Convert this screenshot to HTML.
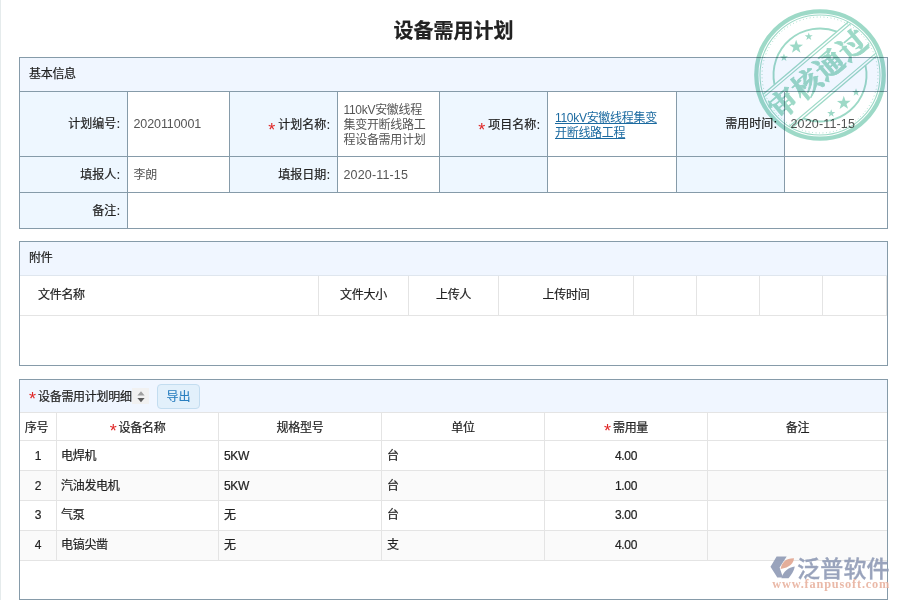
<!DOCTYPE html>
<html lang="zh-CN">
<head>
<meta charset="utf-8">
<title>设备需用计划</title>
<style>
html,body{margin:0;padding:0}
body{position:relative;width:900px;height:600px;overflow:hidden;background:#fff;font-family:"Liberation Sans","Noto Sans CJK SC",sans-serif;font-size:12px;line-height:15px;color:#222}
.strip{position:absolute;left:0;top:0;width:1px;height:600px;background:#e5ebec}
h1{position:absolute;left:0;top:15px;width:907px;height:32px;margin:0;font-size:20px;line-height:32px;font-weight:bold;text-align:center;color:#222;-webkit-text-stroke:0.22px #222}
.panel{position:absolute;left:19px;width:869px;box-sizing:border-box;border:1px solid #869ba9;background:#fff}
.panel-hd{box-sizing:border-box;height:34px;padding:9px 0 0 9px;background:#f0f6ff;border-bottom:1px solid #869ba9;letter-spacing:-0.3px;-webkit-text-stroke:0.2px #222}
#attach .panel-hd{border-bottom-color:#dfe6ee}
table{border-collapse:separate;border-spacing:0;table-layout:fixed;width:867px;font-size:12px;line-height:15px;font-weight:normal;font-style:normal;text-align:left;white-space:normal}
th,td{box-sizing:border-box;padding:0;font-weight:normal;vertical-align:middle;white-space:nowrap;overflow:hidden;text-align:left}
th{color:#222;-webkit-text-stroke:0.2px #222}
.x{display:inline-block;position:relative}
.d1{top:1px}.d2{top:2px}
.req{display:inline-block;position:relative;top:7px;width:7px;margin-right:3px;color:#e02828;font-size:18px;line-height:0;-webkit-text-stroke:0 transparent}
.req2{top:4px;margin-right:2px}
.cl{margin-left:0.5px}

/* basic info form */
.form th,.form td{border-right:1px solid #869ba9;border-bottom:1px solid #869ba9}
.form tr>*:last-child{border-right:0}
.form tr:last-child>*{border-bottom:0}
.form th{background:#eef7ff;text-align:right;padding-right:7px}
.form td{color:#555;padding-left:5.5px}
.form .r1>*{height:65px}
.form .r2>*{height:36px}
.form .r3>*{height:35px}
.cj{letter-spacing:-0.3px}
.num{font-size:12.5px;letter-spacing:-0.1px}
.dt{font-size:12.5px;letter-spacing:0.15px}
.lnk{margin-left:1.5px}
.lnk a{color:#1b6aa0;text-decoration:underline}

/* attachments */
.files th{height:40px;border-right:1px solid #e4e4e4;border-bottom:1px solid #e4e4e4;text-align:center;letter-spacing:-0.3px}
.files th:first-child{text-align:left;padding-left:18px}

/* detail grid */
.toolbar{position:relative;box-sizing:border-box;height:33px;background:#f0f6ff;border-bottom:1px solid #e4e4e4}
.tb-title{position:absolute;left:9px;top:10px;letter-spacing:-0.3px;-webkit-text-stroke:0.2px #222}
.sort{position:absolute;left:112px;top:8px;width:17px;height:16px;background:#f1f1f1}
.sort svg{position:absolute;left:3.5px;top:2px}
.btn{position:absolute;left:137px;top:4px;box-sizing:border-box;width:43px;height:25px;margin:0;padding:0;background:#e2f0fb;border:1px solid #c3ddf0;border-radius:4px;color:#2a7fc0;font-family:"Liberation Sans","Noto Sans CJK SC",sans-serif;font-size:12px;line-height:23px;text-align:center;-webkit-text-stroke:0.15px #2a7fc0}
.btn .x{top:1px}
.grid th,.grid td{border-right:1px solid #e4e4e4;border-bottom:1px solid #e4e4e4;letter-spacing:-0.3px;color:#222;-webkit-text-stroke:0.2px #222}
.grid tr>*:last-child{border-right:0}
.grid th{height:28px;text-align:center}
.grid td{height:30px}
.grid tr.alt td{background:#fafafa}
.grid td.c{text-align:center}
.grid td.p4{padding-left:4px}
.grid td.p5{padding-left:5px}
.grid th .req2{top:5px}

.stamp{position:absolute;left:749.7px;top:4.6px;opacity:.88;mix-blend-mode:multiply}
.logo{position:absolute;left:765px;top:550px;opacity:.9}
</style>
</head>
<body>
<div class="strip"></div>
<h1>设备需用计划</h1>

<section class="panel" id="basic" style="top:57px;height:172px">
<div class="panel-hd">基本信息</div>
<table class="form">
<colgroup><col style="width:108px"><col style="width:102px"><col style="width:108px"><col style="width:102px"><col style="width:108px"><col style="width:129px"><col style="width:108px"><col style="width:102px"></colgroup>
<tr class="r1">
<th><span class="x">计划编号<span class="cl">:</span></span></th>
<td><span class="x num">2020110001</span></td>
<th><span class="x d1"><span class="req">*</span>计划名称<span class="cl">:</span></span></th>
<td><span class="x cj d1">110kV安徽线程<br>集变开断线路工<br>程设备需用计划</span></td>
<th><span class="x d1"><span class="req">*</span>项目名称<span class="cl">:</span></span></th>
<td><span class="x cj d2 lnk"><a>110kV安徽线程集变<br>开断线路工程</a></span></td>
<th><span class="x">需用时间<span class="cl">:</span></span></th>
<td><span class="x dt">2020-11-15</span></td>
</tr>
<tr class="r2">
<th><span class="x d1">填报人<span class="cl">:</span></span></th>
<td><span class="x cj d1">李朗</span></td>
<th><span class="x d1">填报日期<span class="cl">:</span></span></th>
<td><span class="x dt d1">2020-11-15</span></td>
<th></th>
<td></td>
<th></th>
<td></td>
</tr>
<tr class="r3">
<th><span class="x d1">备注<span class="cl">:</span></span></th>
<td colspan="7"></td>
</tr>
</table>
</section>

<section class="panel" id="attach" style="top:241px;height:125px">
<div class="panel-hd">附件</div>
<table class="files">
<colgroup><col style="width:299px"><col style="width:90px"><col style="width:90px"><col style="width:135px"><col style="width:63px"><col style="width:63px"><col style="width:63px"><col style="width:64px"></colgroup>
<tr>
<th>文件名称</th>
<th>文件大小</th>
<th>上传人</th>
<th>上传时间</th>
<th></th>
<th></th>
<th></th>
<th></th>
</tr>
</table>
</section>

<section class="panel" id="detail" style="top:379px;height:221px">
<div class="toolbar">
<span class="tb-title"><span class="req req2">*</span>设备需用计划明细</span>
<span class="sort"><svg width="10" height="13" viewBox="0 0 10 13"><path d="M5 1.3 L8.6 5.5 H1.4 Z" fill="#a0a0a0"/><path d="M1.4 8 H8.6 L5 12.2 Z" fill="#5a5a5a"/></svg></span>
<button class="btn" type="button"><span class="x">导出</span></button>
</div>
<table class="grid">
<colgroup><col style="width:37px"><col style="width:162px"><col style="width:163px"><col style="width:163px"><col style="width:163px"><col style="width:179px"></colgroup>
<tr>
<th><span class="x d2" style="left:-1.5px">序号</span></th>
<th><span class="x d2"><span class="req req2">*</span>设备名称</span></th>
<th><span class="x d2">规格型号</span></th>
<th><span class="x d2">单位</span></th>
<th><span class="x d2"><span class="req req2">*</span>需用量</span></th>
<th><span class="x d2">备注</span></th>
</tr>
<tr><td class="c"><span class="x d1">1</span></td><td class="p4"><span class="x d1">电焊机</span></td><td class="p5"><span class="x d1">5KW</span></td><td class="p5"><span class="x d1">台</span></td><td class="c"><span class="x d1">4.00</span></td><td></td></tr>
<tr class="alt"><td class="c"><span class="x d1">2</span></td><td class="p4"><span class="x d1">汽油发电机</span></td><td class="p5"><span class="x d1">5KW</span></td><td class="p5"><span class="x d1">台</span></td><td class="c"><span class="x d1">1.00</span></td><td></td></tr>
<tr><td class="c"><span class="x">3</span></td><td class="p4"><span class="x">气泵</span></td><td class="p5"><span class="x">无</span></td><td class="p5"><span class="x">台</span></td><td class="c"><span class="x">3.00</span></td><td></td></tr>
<tr class="alt"><td class="c"><span class="x">4</span></td><td class="p4"><span class="x">电镐尖凿</span></td><td class="p5"><span class="x">无</span></td><td class="p5"><span class="x">支</span></td><td class="c"><span class="x">4.00</span></td><td></td></tr>
</table>
</section>

<svg class="stamp" width="140" height="140" viewBox="-70 -70 140 140">
<g fill="none" stroke="#8fd4bf">
<circle r="63.7" stroke-width="4.3"/>
<circle r="60" stroke-width="1.1"/>
<circle r="58" stroke-width="1" stroke-dasharray="0.9 2.6"/>
</g>
<g transform="rotate(-40.3)">
<g fill="none" stroke="#8fd4bf" stroke-width="1.9">
<path d="M-40.91 -22.10 A46.5 46.5 0 0 1 40.91 -22.10"/>
<path d="M40.91 22.10 A46.5 46.5 0 0 1 -40.91 22.10"/>
</g>
<g stroke="#8fd4bf" fill="none">
<path d="M-55.78 -22.1 H55.78" stroke-width="1.4"/>
<path d="M-56.78 -19.4 H56.78" stroke-width="1.1"/>
<path d="M-55.78 22.1 H55.78" stroke-width="1.4"/>
<path d="M-56.78 19.4 H56.78" stroke-width="1.1"/>
</g>
<polygon points="4.63,-42.32 2.79,-37.50 6.68,-34.10 1.53,-34.36 -0.50,-29.62 -1.85,-34.59 -6.99,-35.06 -2.67,-37.88 -3.82,-42.91 0.20,-39.67" fill="#8fd4bf"/>
<polygon points="-13.57,-39.76 -14.64,-36.95 -12.38,-34.97 -15.38,-35.12 -16.56,-32.35 -17.35,-35.25 -20.34,-35.53 -17.83,-37.17 -18.50,-40.10 -16.15,-38.22" fill="#8fd4bf"/>
<polygon points="18.97,-39.76 17.90,-36.95 20.16,-34.97 17.16,-35.12 15.98,-32.35 15.19,-35.25 12.19,-35.53 14.71,-37.17 14.04,-40.10 16.39,-38.22" fill="#8fd4bf"/>
<polygon points="4.63,31.28 2.79,36.10 6.68,39.50 1.53,39.24 -0.50,43.98 -1.85,39.01 -6.99,38.54 -2.67,35.72 -3.82,30.69 0.20,33.93" fill="#8fd4bf"/>
<polygon points="18.97,33.32 17.90,36.14 20.16,38.12 17.16,37.97 15.98,40.73 15.19,37.83 12.19,37.56 14.71,35.91 14.04,32.98 16.39,34.87" fill="#8fd4bf"/>
<polygon points="-13.57,33.32 -14.64,36.14 -12.38,38.12 -15.38,37.97 -16.56,40.73 -17.35,37.83 -20.34,37.56 -17.83,35.91 -18.50,32.98 -16.15,34.87" fill="#8fd4bf"/>
<text x="-60.5 -30.5 -0.5 29.5" y="8.8" font-family="'Liberation Serif','Noto Serif CJK SC',serif" font-weight="bold" font-size="29" fill="#8fd4bf" stroke="#8fd4bf" stroke-width="0.8" stroke-linejoin="round">审核通过</text>
</g>
</svg>

<svg class="logo" width="135" height="46" viewBox="765 550 135 46">
<path d="M770.5 566.8 L776.6 556.4 H786.7 L779.6 567.4 L783 577.6 H777.3 Z" fill="#8f9ab5"/>
<path d="M780.6 569 C781.5 562 786.5 558 794 558.2 C793.8 563 789.5 567.5 780.6 569 Z" fill="#e2a690"/>
<path d="M781.4 578.3 C783 571.5 788.5 567.5 794.8 566.6 C794 571 791.5 575 788.5 578.3 Z" fill="#8f9ab5"/>
<text x="797 820.2 843.4 866.6" y="576.5" font-family="'Liberation Sans','Noto Sans CJK SC',sans-serif" font-weight="500" font-size="23" fill="#8f9ab5" stroke="#8f9ab5" stroke-width="0.32">泛普软件</text>
<text x="772.3" y="587.8" font-family="Liberation Serif, serif" font-weight="bold" font-size="12.3" letter-spacing="0.82" fill="#e8b29f">www.fanpusoft.com</text>
</svg>
</body>
</html>
